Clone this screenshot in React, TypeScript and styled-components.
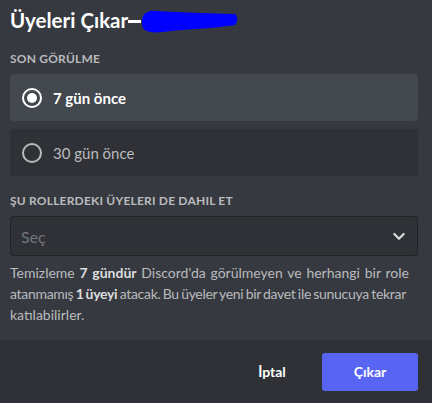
import { createGlobalStyle, styled } from 'styled-components'

const GlobalStyle = createGlobalStyle`
  html, body {
    margin: 0;
    padding: 0;
    background: #36393f;
  }
  body {
    font-family: Lato, 'Noto Sans', sans-serif;
  }
  * {
    box-sizing: border-box;
  }
`

const Modal = styled.div`
  width: 432px;
  height: 403px;
  background: #36393f;
  display: flex;
  flex-direction: column;
  overflow: hidden;
`

const Body = styled.div`
  flex: 1;
  padding: 5px 14px 0 10px;
`

const Title = styled.h2`
  margin: 0;
  display: flex;
  align-items: center;
  font-size: 20.5px;
  font-weight: 700;
  color: #ffffff;
  height: 30px;
`

const Dash = styled.span`
  display: inline-block;
  width: 13px;
  height: 2.5px;
  margin: 3px 0 0 0;
  background: #ffffff;
`

const Scribble = styled.svg`
  margin-top: 3px;
`

const SectionLabel = styled.h3<{ $top: number }>`
  margin: ${({ $top }) => $top}px 0 0;
  font-size: 12px;
  font-weight: 700;
  text-transform: uppercase;
  color: #b9bbbe;
  letter-spacing: 0.2px;
  line-height: 14px;
`

const Options = styled.div`
  display: flex;
  flex-direction: column;
  gap: 8px;
  margin-top: 8px;
`

const Option = styled.label<{ $selected?: boolean }>`
  display: flex;
  align-items: center;
  gap: 11px;
  height: 47px;
  padding: 0 12px;
  border-radius: 3px;
  background: ${({ $selected }) => ($selected ? '#43474e' : '#2f3136')};
  color: ${({ $selected }) => ($selected ? '#ffffff' : '#b9bbbe')};
  font-size: 15px;
  font-weight: ${({ $selected }) => ($selected ? 700 : 400)};
`

const Radio = styled.span<{ $checked?: boolean }>`
  width: 20px;
  height: 20px;
  border-radius: 50%;
  border: 2px solid ${({ $checked }) => ($checked ? '#ffffff' : '#b9bbbe')};
  display: flex;
  align-items: center;
  justify-content: center;

  &::after {
    content: '';
    width: 10px;
    height: 10px;
    border-radius: 50%;
    background: #ffffff;
    display: ${({ $checked }) => ($checked ? 'block' : 'none')};
  }
`

const Select = styled.div`
  margin-top: 8px;
  height: 40px;
  border: 1px solid #222326;
  border-radius: 3px;
  background: #2f3136;
  display: flex;
  align-items: center;
  justify-content: space-between;
  padding: 0 10px 0 10px;
  color: #72767d;
  font-size: 16px;
`

const Chevron = styled.svg`
  color: #dcddde;
`

const Description = styled.p`
  margin: 6px 0 0;
  font-size: 14px;
  line-height: 21px;
  color: #b9bbbe;
  white-space: nowrap;

  & b {
    color: #dcddde;
    font-weight: 700;
  }
`

const Line = styled.span<{ $spacing: number; $words: number }>`
  display: block;
  letter-spacing: ${({ $spacing }) => $spacing}px;
  word-spacing: ${({ $words }) => $words}px;
`

const Footer = styled.div`
  height: 63px;
  background: #2f3136;
  display: flex;
  align-items: center;
  justify-content: flex-end;
  gap: 2px;
  padding: 0 14px 0 0;
`

const Button = styled.button<{ $primary?: boolean }>`
  height: 38px;
  width: 96px;
  border: none;
  border-radius: 3px;
  font-family: inherit;
  font-size: 14px;
  font-weight: 700;
  color: #ffffff;
  background: ${({ $primary }) => ($primary ? '#5865f2' : 'transparent')};
  cursor: pointer;
`

const App = () => {
  return (
    <>
      <GlobalStyle />
      <Modal>
        <Body>
          <Title>
            Üyeleri Çıkar
            <Dash />
            <Scribble width="97" height="25" viewBox="0 0 97 25">
              <path
                d="M1 13 C1 4 7 1 15 2 C35 3 60 4 94 5 C97 7 97 13 94 16 C75 19 50 20 30 22 C18 24 8 24 4 21 C1 19 1 16 1 13 Z"
                fill="#0000ff"
              />
            </Scribble>
          </Title>
          <SectionLabel $top={17}>Son Görülme</SectionLabel>
          <Options>
            <Option $selected>
              <Radio $checked />
              7 gün önce
            </Option>
            <Option>
              <Radio />
              30 gün önce
            </Option>
          </Options>
          <SectionLabel $top={18}>Şu rollerdeki üyeleri de dahil et</SectionLabel>
          <Select>
            Seç
            <Chevron width="16" height="16" viewBox="0 0 24 24">
              <path
                d="M5 9 L12 16 L19 9"
                fill="none"
                stroke="currentColor"
                strokeWidth="3.2"
                strokeLinecap="round"
                strokeLinejoin="round"
              />
            </Chevron>
          </Select>
          <Description>
            <Line $spacing={0} $words={1.2}>
              Temizleme <b>7 gündür</b> Discord'da görülmeyen ve herhangi bir role
            </Line>
            <Line $spacing={-0.3} $words={-1}>
              atanmamış <b>1 üyeyi</b> atacak. Bu üyeler yeni bir davet ile sunucuya tekrar
            </Line>
            <Line $spacing={0} $words={0}>
              katılabilirler.
            </Line>
          </Description>
        </Body>
        <Footer>
          <Button>İptal</Button>
          <Button $primary>Çıkar</Button>
        </Footer>
      </Modal>
    </>
  )
}

export default App
